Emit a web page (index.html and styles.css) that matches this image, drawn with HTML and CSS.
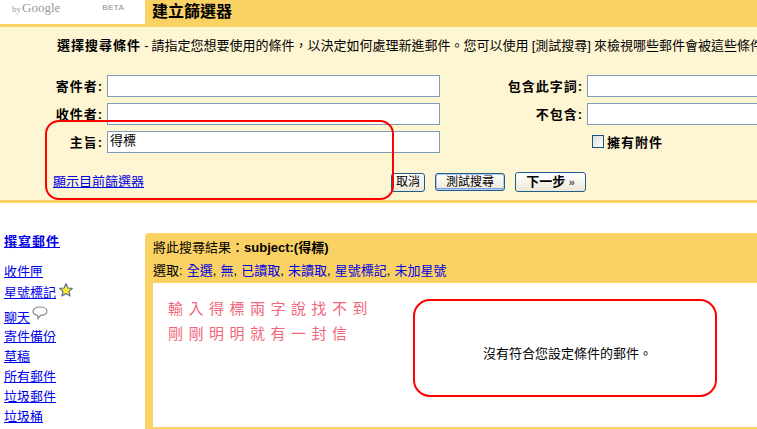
FILE: index.html
```html
<!DOCTYPE html>
<html lang="zh-Hant">
<head>
<meta charset="utf-8">
<title>建立篩選器</title>
<link rel="stylesheet" href="styles.css">
</head>
<body>
<div class="page">
  <header class="top">
    <div class="brand"><span class="by">by</span><span class="google">Google</span><span class="beta">BETA</span></div>
    <h1 class="title">建立篩選器</h1>
  </header>
  <section class="panel">
    <p class="intro"><b>選擇搜尋條件</b> - 請指定您想要使用的條件，以決定如何處理新進郵件。您可以使用 [測試搜尋] 來檢視哪些郵件會被這些條件篩選</p>
    <div class="form">
      <label class="lbl">寄件者:</label><input class="field" type="text">
      <label class="lbl">包含此字詞:</label><input class="field" type="text">
      <label class="lbl">收件者:</label><input class="field" type="text">
      <label class="lbl">不包含:</label><input class="field" type="text">
      <label class="lbl">主旨:</label><input class="field" type="text" value="得標">
      <span></span><label class="attach"><span class="check"></span>擁有附件</label>
    </div>
    <div class="actions">
      <a class="link" href="#">顯示目前篩選器</a>
      <div class="buttons">
        <button class="btn cancel">取消</button>
        <button class="btn test">測試搜尋</button>
        <button class="btn next"><b>下一步</b> <span class="raquo">»</span></button>
      </div>
    </div>
    <div class="ring ring-form"></div>
  </section>
  <div class="lower">
    <nav class="side">
      <a class="link compose" href="#">撰寫郵件</a>
      <a class="link item" href="#">收件匣</a>
      <div class="item star-row"><a class="link" href="#">星號標記 </a><svg class="star" width="14" height="14" viewBox="0 0 14 14"><path d="M7 .8 8.900 5l4.400.4-3.300 3 1 4.500L7 10.600 3 12.900l1-4.500-3.300-3L5.100 5z" fill="#ffee22" stroke="#5a6a9a" stroke-width="1.200" stroke-linejoin="round"/></svg></div>
      <div class="item chat-row"><a class="link" href="#">聊天 </a><svg class="bubble" width="16" height="14" viewBox="0 0 16 14"><path d="M8 1C4 1 1 2.800 1 5.200 1 7.200 3 8.800 5.600 9.300L6 12.500 8.600 9.400C12.300 9.300 15 7.500 15 5.200 15 2.800 12 1 8 1z" fill="#fff" stroke="#8a8a8a" stroke-width="1.200"/></svg></div>
      <a class="link item" href="#">寄件備份</a>
      <a class="link item" href="#">草稿</a>
      <a class="link item" href="#">所有郵件</a>
      <a class="link item" href="#">垃圾郵件</a>
      <a class="link item" href="#">垃圾桶</a>
    </nav>
    <main class="results">
      <div class="res-head">
        <div class="res-query">將此搜尋結果：<b>subject:(得標)</b></div>
        <div class="res-select">選取: <a href="#">全選</a>, <a href="#">無</a>, <a href="#">已讀取</a>, <a href="#">未讀取</a>, <a href="#">星號標記</a>, <a href="#">未加星號</a></div>
      </div>
      <div class="res-body">
        <div class="note">輸入得標兩字說找不到<br>剛剛明明就有一封信</div>
        <div class="empty">沒有符合您設定條件的郵件。</div>
        <div class="ring ring-empty"></div>
      </div>
    </main>
  </div>
</div>
</body>
</html>
```

FILE: styles.css
```css
* { box-sizing: border-box; }
html, body { margin: 0; padding: 0; background: #fff; }
body { font-family: "Liberation Sans", "Noto Sans CJK TC", sans-serif; font-size: 13px; color: #000; }
.page { position: relative; width: 757px; height: 429px; overflow: hidden; }
a { color: #0000e6; text-decoration: none; }
.link { color: #0000e6; text-decoration: underline; }

.top { display: flex; height: 27px; background: #fad163; }
.brand { width: 145px; height: 24px; background: #fff; color: #999; display: flex; align-items: center; padding: 0 0 9px 12px; }
.by { font-family: "Liberation Serif", serif; font-size: 9px; margin-top: 2px; }
.google { font-family: "Liberation Serif", serif; font-size: 13px; margin-left: 1px; }
.beta { font-size: 8px; letter-spacing: .4px; margin-left: 42px; color: #888; }
.title { margin: 0; padding: 1px 0 0 7px; font-size: 16px; line-height: 22px; font-weight: 700; }

.panel { position: relative; height: 176px; background: #fef5d3; border-bottom: 3px solid #fad163; }
.intro { margin: 0; padding: 10px 0 0 57px; height: 48px; line-height: 18px; white-space: nowrap; overflow: hidden; word-spacing: -.5px; }
.intro b { letter-spacing: 1px; }
.form { display: grid; grid-template-columns: 103px 333px 139px 200px; column-gap: 4px; row-gap: 6px; grid-auto-rows: 22px; align-items: center; }
.lbl { text-align: right; font-weight: 700; letter-spacing: 1px; line-height: 22px; padding-top: 2px; white-space: nowrap; }
.field { width: 100%; height: 22px; border: 1px solid #7f9db9; background: #fff; padding: 0 2px 5px; margin: 0; font: inherit; color: #000; outline: none; }
.attach { display: flex; align-items: center; font-weight: 700; letter-spacing: 1px; margin-left: 5px; gap: 3px; line-height: 14px; padding-top: 2px; }
.check { width: 12px; height: 13px; border: 1px solid #1c5180; background: linear-gradient(135deg, #dcdcd7, #fff); margin-top: -3px; }

.actions { display: flex; align-items: center; padding: 19px 0 0 53px; }
.actions .link { line-height: 20px; }
.buttons { display: flex; align-items: center; gap: 10px; margin-left: 247px; }
.btn { height: 19px; padding: 0; border: 1px solid #1f5c8c; border-radius: 3px; background: linear-gradient(#fff, #ece9d8); font: inherit; font-size: 12px; color: #000; line-height: 15px; white-space: nowrap; }
.cancel { width: 34px; }
.test { width: 70px; height: 18px; border: 1px solid #1f5c8c; box-shadow: inset 0 0 0 1px #b5cdf0, inset 0 -1px 0 1px #7ba2e0; }
.next { width: 71px; height: 20px; font-size: 13px; }
.raquo { font-size: 11px; color: #555; font-weight: 700; }

.ring { position: absolute; border: 2px solid #f00; pointer-events: none; }
.ring-form { left: 45px; top: 93px; width: 349px; height: 80px; border-radius: 14px; }

.lower { display: flex; padding-top: 30px; }
.side { width: 145px; flex: none; padding: 0 0 0 4px; display: flex; flex-direction: column; }
.compose { font-weight: 700; letter-spacing: 1px; line-height: 18px; margin-bottom: 11px; align-self: flex-start; }
.item { display: block; height: 20px; line-height: 20px; align-self: flex-start; white-space: nowrap; }
.star-row { height: 23px; padding-top: 1px; position: relative; }
.chat-row { height: 22px; padding-top: 3px; position: relative; }
.star { position: absolute; left: 55px; top: 1px; }
.bubble { position: absolute; left: 28px; top: 1px; }

.results { flex: 1; height: 196px; min-width: 0; background: #fad163; border-radius: 4px 0 0 0; padding: 0 0 2px 8px; }
.res-head { height: 50px; padding: 6px 0 0 0; }
.res-query { line-height: 18px; }
.res-select { line-height: 18px; margin-top: 5px; word-spacing: .5px; }
.res-body { position: relative; height: 144px; background: #fff; display: flex; align-items: center; padding: 0 0 3px 330px; }
.note { position: absolute; left: 15px; top: 13px; color: #f0405a; font-size: 15px; line-height: 25px; letter-spacing: 5.500px; white-space: nowrap; opacity: .8; }
.empty { line-height: 18px; white-space: nowrap; }
.ring-empty { left: 260px; top: 16px; width: 304px; height: 98px; border-radius: 17px; }
```
